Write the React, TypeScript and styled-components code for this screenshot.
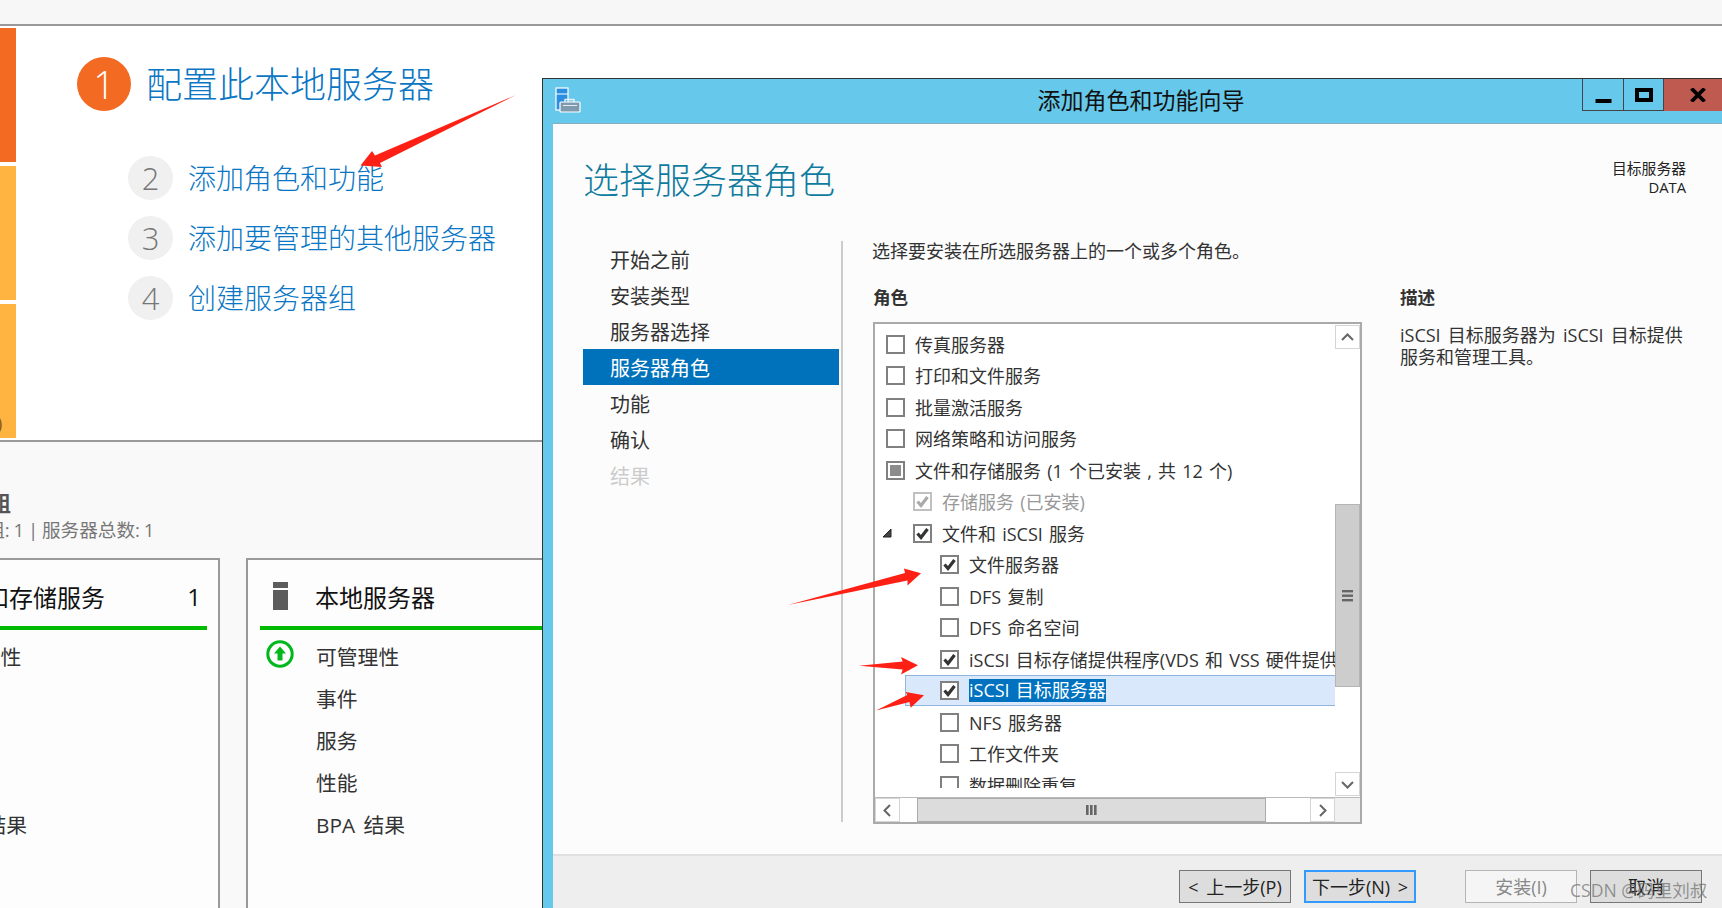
import { FunctionComponent } from "react";
import styled, { createGlobalStyle } from "styled-components";

const SANS = `"Open Sans", "Noto Sans CJK SC", sans-serif`;

const GlobalStyle = createGlobalStyle`
    html, body {
        margin: 0;
        padding: 0;
        background: #f9f9f9;
    }
    * {
        box-sizing: border-box;
    }
`;

const Page = styled.div`
    position: relative;
    width: 1722px;
    height: 908px;
    overflow: hidden;
    font-family: ${SANS};
    color: #333;
    display: flex;
    flex-direction: column;
`;

const TopBand = styled.div`
    height: 26px;
    flex: none;
    background: #f7f7f7;
    border-bottom: 2px solid #999;
`;

const WelcomePanel = styled.section`
    height: 416px;
    flex: none;
    background: #fff;
    border-bottom: 2px solid #999;
    display: flex;
`;

const Stripe = styled.div`
    width: 16px;
    flex: none;
    padding-top: 2px;
    display: flex;
    flex-direction: column;
    gap: 4px;
`;

const StripeSegment = styled.div<{ $hot?: boolean }>`
    height: 134px;
    background: ${(p) => (p.$hot ? "#f36a22" : "#ffb341")};
    display: flex;
    align-items: flex-end;
    overflow: hidden;
    font-size: 18px;
    line-height: 24px;
    color: #8a5a12;
`;

const ClippedParen = styled.span`
    margin-left: -3px;
    margin-bottom: 3px;
`;

const Steps = styled.div`
    margin-left: 61px;
    padding-top: 31px;
`;

const LeadStep = styled.div`
    display: flex;
    align-items: center;
    gap: 15px;
    height: 54px;
`;

const LeadBadge = styled.div`
    width: 54px;
    height: 54px;
    border-radius: 50%;
    background: #f36a22;
    color: #fff;
    font-size: 38px;
    font-weight: 300;
    display: flex;
    align-items: center;
    justify-content: center;
`;

const LeadText = styled.div`
    margin-top: -4px;
    font-size: 36px;
    font-weight: 300;
    color: #0a76c4;
    white-space: nowrap;
`;

const StepList = styled.div`
    margin: 37px 0 0 51px;
`;

const StepRow = styled.div`
    height: 60px;
    display: flex;
    align-items: center;
    gap: 15px;
`;

const StepBadge = styled.div`
    width: 45px;
    height: 44px;
    border-radius: 50%;
    background: #f0f0f0;
    color: #777;
    font-size: 31px;
    font-weight: 300;
    display: flex;
    align-items: center;
    justify-content: center;
`;

const StepText = styled.div`
    margin-top: -3px;
    font-size: 28px;
    font-weight: 300;
    color: #0a76c4;
    white-space: nowrap;
`;

const LowerSection = styled.section`
    flex: 1;
    background: #f9f9f9;
    padding-top: 49px;
    overflow: hidden;
`;

const GroupTitle = styled.div`
    margin-left: -136px;
    height: 24px;
    line-height: 24px;
    font-size: 21px;
    font-weight: 700;
    color: #555;
    white-space: nowrap;
`;

const GroupSub = styled.div`
    margin: 4px 0 0 -144px;
    height: 22px;
    line-height: 22px;
    font-size: 18.6px;
    word-spacing: -1px;
    color: #777;
    white-space: nowrap;
`;

const Cards = styled.div`
    margin: 17px 0 0 -132px;
    display: flex;
    gap: 26px;
`;

const Card = styled.div`
    width: 352px;
    height: 420px;
    flex: none;
    background: #fdfdfd;
    border: 2px solid #999;
`;

const CardHeader = styled.div`
    height: 70px;
    margin: 0 11px 0 12px;
    padding: 6px 6px 0 13px;
    border-bottom: 4px solid #00bb00;
    display: flex;
    align-items: center;
`;

const CardTitle = styled.div`
    margin-left: 27px;
    flex: 1;
    font-size: 24px;
    color: #111;
    white-space: nowrap;
`;

const CardCount = styled.div`
    font-size: 24px;
    color: #111;
`;

const CardBody = styled.div`
    margin-top: 5px;
`;

const HealthRow = styled.div`
    height: 42px;
    padding-left: 18px;
    display: flex;
    align-items: center;
    gap: 22px;
    font-size: 20.8px;
    word-spacing: 3px;
    color: #333;
`;

const HealthSlot = styled.div`
    width: 28px;
    height: 28px;
    flex: none;
    margin-top: -4px;
`;

const Dialog = styled.div`
    position: absolute;
    left: 542px;
    top: 78px;
    width: 1180px;
    height: 830px;
    background: #66c9eb;
    border-left: 1px solid #333;
    border-top: 1px solid #333;
    display: flex;
    flex-direction: column;
`;

const TitleBar = styled.header`
    height: 44px;
    flex: none;
    display: grid;
    grid-template-columns: 157px 1fr 140px;
    align-items: start;
`;

const TitleIcon = styled.svg`
    margin: 8px 0 0 12px;
    display: block;
`;

const TitleText = styled.div`
    text-align: center;
    font-size: 23px;
    line-height: 42px;
    color: #111;
`;

const WindowButtons = styled.div`
    display: flex;
    height: 32px;
`;

const WindowButton = styled.div<{ $width: number; $close?: boolean }>`
    width: ${(p) => p.$width}px;
    padding-left: ${(p) => (p.$close ? 9 : 0)}px;
    display: flex;
    align-items: center;
    justify-content: center;
    border-left: 1px solid #444;
    border-bottom: ${(p) => (p.$close ? "none" : "1px solid #444")};
    background: ${(p) => (p.$close ? "#bf5a50" : "transparent")};
`;

const DialogBody = styled.div`
    flex: 1;
    margin-left: 10px;
    background: #fcfcfc;
    border-top: 1px solid #86aebf;
    display: flex;
    flex-direction: column;
    min-height: 0;
`;

const BodyHeader = styled.div`
    height: 117px;
    flex: none;
    display: flex;
    justify-content: space-between;
    padding: 35px 36px 0 30px;
`;

const PageTitle = styled.h1`
    margin: 0;
    font-size: 36px;
    line-height: 44px;
    font-weight: 300;
    color: #0f7b9e;
`;

const TargetInfo = styled.div`
    text-align: right;
    font-size: 14.8px;
    line-height: 19px;
    color: #222;
`;

const MainRow = styled.div`
    height: 581px;
    flex: none;
    margin-left: 30px;
    display: flex;
`;

const Nav = styled.nav`
    width: 260px;
    flex: none;
    padding-right: 2px;
    border-right: 2px solid #ccc;
`;

const NavItem = styled.div<{ $selected?: boolean; $disabled?: boolean }>`
    height: 36px;
    padding-left: 27px;
    display: flex;
    align-items: center;
    font-size: 20px;
    color: ${(p) => (p.$selected ? "#fff" : p.$disabled ? "#ccc" : "#333")};
    background: ${(p) => (p.$selected ? "#0072bc" : "transparent")};
`;

const RolesColumn = styled.div`
    width: 489px;
    flex: none;
    margin-left: 30px;
`;

const Intro = styled.div`
    margin-left: -1px;
    height: 20px;
    line-height: 20px;
    font-size: 18px;
    color: #333;
    white-space: nowrap;
`;

const SectionLabel = styled.div`
    height: 20px;
    line-height: 20px;
    font-size: 17.6px;
    font-weight: 700;
    color: #333;
`;

const RolesLabel = styled(SectionLabel)`
    margin-top: 26px;
`;

const ListBox = styled.div`
    margin-top: 15px;
    height: 502px;
    border: 2px solid #aaa;
    background: #fff;
    display: grid;
    grid-template-columns: 1fr 25px;
    grid-template-rows: 1fr 25px;
`;

const ListCell = styled.div`
    padding-bottom: 9px;
    min-width: 0;
    min-height: 0;
`;

const ListViewport = styled.div`
    height: 100%;
    padding-top: 4px;
    overflow: hidden;
`;

const Row = styled.div<{ $level: number; $disabled?: boolean; $selected?: boolean }>`
    height: 31.5px;
    padding-left: ${(p) => (p.$selected ? 34 : 11 + p.$level * 27)}px;
    margin-left: ${(p) => (p.$selected ? 30 : 0)}px;
    display: flex;
    align-items: center;
    font-size: 18px;
    word-spacing: 1.5px;
    white-space: nowrap;
    color: ${(p) => (p.$disabled ? "#999" : "#333")};
    background: ${(p) => (p.$selected ? "#d9e8fb" : "transparent")};
    border: ${(p) => (p.$selected ? "1px solid #8fb4dd" : "none")};
    border-right: none;
`;

const Twisty = styled.svg`
    width: 31px;
    height: 10px;
    margin-left: -31px;
    flex: none;
`;

const Box = styled.span<{ $faded?: boolean }>`
    width: 19px;
    height: 19px;
    flex: none;
    margin-top: 1px;
    margin-right: 10px;
    background: #fff;
    border: 2px solid ${(p) => (p.$faded ? "#c0c0c0" : "#808080")};
    display: flex;
    align-items: center;
    justify-content: center;
`;

const MixedFill = styled.span`
    width: 11px;
    height: 11px;
    background: #8c8c8c;
`;

const SelectedText = styled.span`
    background: #0072c0;
    color: #fff;
    line-height: 23px;
`;

const VScroll = styled.div`
    background: #fff;
    display: flex;
    flex-direction: column;
    padding-top: 1px;
`;

const ScrollButton = styled.div`
    width: 25px;
    height: 24px;
    flex: none;
    background: #fff;
    border: 1px solid #d5d5d5;
    display: flex;
    align-items: center;
    justify-content: center;
`;

const VThumb = styled.div`
    margin-top: 155px;
    height: 183px;
    flex: none;
    background: #cdcdcd;
    border: 1px solid #b5b5b5;
    display: flex;
    align-items: center;
    justify-content: center;
`;

const VDown = styled(ScrollButton)`
    margin-top: auto;
    margin-bottom: 1px;
`;

const HScroll = styled.div`
    background: #fff;
    border-top: 1px solid #bbb;
    display: flex;
`;

const HThumb = styled.div`
    margin-left: 17px;
    width: 349px;
    flex: none;
    background: #dcdcdc;
    border: 1px solid #aaa;
    display: flex;
    align-items: center;
    justify-content: center;
`;

const HRight = styled(ScrollButton)`
    margin-left: auto;
`;

const ScrollCorner = styled.div`
    background: #f0f0f0;
    border-top: 1px solid #bbb;
`;

const DescColumn = styled.div`
    width: 290px;
    flex: none;
    margin-left: 38px;
    padding-top: 46px;
`;

const DescText = styled.p`
    margin: 18px 0 0;
    font-size: 18px;
    line-height: 21.5px;
    word-spacing: 2.5px;
    color: #333;
`;

const Spacer = styled.div`
    height: 32px;
    flex: none;
`;

const Footer = styled.footer`
    flex: 1;
    background: #eee;
    border-top: 2px solid #e0e0e0;
    padding: 14px 20px 0 0;
    display: flex;
    justify-content: flex-end;
    align-items: flex-start;
`;

const WizardButton = styled.div<{ $variant?: "focus" | "disabled" }>`
    width: 112px;
    height: 33px;
    margin-left: 13px;
    padding-bottom: 2px;
    display: flex;
    align-items: center;
    justify-content: center;
    font-size: 18px;
    word-spacing: 3px;
    white-space: pre;
    color: ${(p) => (p.$variant === "disabled" ? "#888" : "#222")};
    background: ${(p) => (p.$variant === "disabled" ? "#f5f5f5" : "#ddd")};
    border: 1px solid
        ${(p) => (p.$variant === "focus" ? "#3399ff" : p.$variant === "disabled" ? "#b5b5b5" : "#777")};
    outline: ${(p) => (p.$variant === "focus" ? "1px solid #3399ff" : "none")};
    outline-offset: -2px;
`;

const InstallButton = styled(WizardButton)`
    margin-left: 49px;
`;

const Watermark = styled.div`
    position: absolute;
    left: 1570px;
    top: 877px;
    font-size: 17.6px;
    line-height: 26px;
    color: rgba(110, 110, 110, 0.72);
    white-space: nowrap;
`;

const Annotations = styled.svg`
    position: absolute;
    left: 0;
    top: 0;
    pointer-events: none;
`;

const Check: FunctionComponent<{ faded?: boolean }> = ({ faded }) => (
    <svg width="15" height="15" viewBox="0 0 15 15">
        <path d="M2.5 7.5 L6 11.5 L12.5 3" fill="none" stroke={faded ? "#aaa" : "#333"} strokeWidth="3.2" />
    </svg>
);

const Chevron: FunctionComponent<{ dir: "up" | "down" | "left" | "right" }> = ({ dir }) => {
    const paths = {
        up: "M2 10 L7.5 4.5 L13 10",
        down: "M2 5 L7.5 10.5 L13 5",
        left: "M10 2 L4.5 7.5 L10 13",
        right: "M5 2 L10.5 7.5 L5 13",
    };
    return (
        <svg width="15" height="15" viewBox="0 0 15 15">
            <path d={paths[dir]} fill="none" stroke="#666" strokeWidth="2" />
        </svg>
    );
};

const Grip: FunctionComponent<{ vertical?: boolean }> = ({ vertical }) => (
    <svg width="13" height="12" viewBox="0 0 13 12">
        {vertical
            ? [1, 5, 9].map((x) => <rect key={x} x={x} y="1" width="2.6" height="10" fill="#666" />)
            : [0, 4.5, 9].map((y) => <rect key={y} x="1" y={y} width="11" height="2.4" fill="#666" />)}
    </svg>
);

type CheckState = "off" | "on" | "mixed" | "faded";

interface RoleRow {
    level: number;
    label: string;
    state: CheckState;
    expanded?: boolean;
    selected?: boolean;
}

const roles: RoleRow[] = [
    { level: 0, label: "传真服务器", state: "off" },
    { level: 0, label: "打印和文件服务", state: "off" },
    { level: 0, label: "批量激活服务", state: "off" },
    { level: 0, label: "网络策略和访问服务", state: "off" },
    { level: 0, label: "文件和存储服务 (1 个已安装 , 共 12 个)", state: "mixed" },
    { level: 1, label: "存储服务 (已安装)", state: "faded" },
    { level: 1, label: "文件和 iSCSI 服务", state: "on", expanded: true },
    { level: 2, label: "文件服务器", state: "on" },
    { level: 2, label: "DFS 复制", state: "off" },
    { level: 2, label: "DFS 命名空间", state: "off" },
    { level: 2, label: "iSCSI 目标存储提供程序(VDS 和 VSS 硬件提供程序)", state: "on" },
    { level: 2, label: "iSCSI 目标服务器", state: "on", selected: true },
    { level: 2, label: "NFS 服务器", state: "off" },
    { level: 2, label: "工作文件夹", state: "off" },
    { level: 2, label: "数据删除重复", state: "off" },
];

const navItems = ["开始之前", "安装类型", "服务器选择", "服务器角色", "功能", "确认", "结果"];
const healthItems = ["可管理性", "事件", "服务", "性能", "BPA 结果"];

const arrows = [
    "M516 95 L375 155.5 L372 151 L360.5 165.5 L382 167 L380 163 Z",
    "M788 605 L905 573 L904 568.5 L921 573.3 L907.5 585.5 L907.5 580.5 Z",
    "M859 665.7 L902.7 661.5 L901 657 L918 665.3 L901 674.5 L902.7 669.5 Z",
    "M876 710.5 L907.3 695 L905.7 692 L924 695.3 L910.7 707.8 L909.5 702 Z",
];

const HealthCard: FunctionComponent<{ title: string; count?: number; icon: boolean }> = ({ title, count, icon }) => (
    <Card>
        <CardHeader>
            <svg width="15" height="28" viewBox="0 0 15 28">
                <rect x="0" y="0" width="15" height="6" fill="#5c5c5c" />
                <rect x="0" y="8" width="15" height="20" fill="#5c5c5c" />
            </svg>
            <CardTitle>{title}</CardTitle>
            {count !== undefined && <CardCount>{count}</CardCount>}
        </CardHeader>
        <CardBody>
            {healthItems.map((item, i) => (
                <HealthRow key={item}>
                    <HealthSlot>
                        {i === 0 && icon && (
                            <svg width="28" height="28" viewBox="0 0 28 28">
                                <circle cx="14" cy="14" r="12.2" fill="#fff" stroke="#00b81c" strokeWidth="3" />
                                <path d="M14 6.5 L20 13.5 L16.5 13.5 L16.5 20.5 L11.5 20.5 L11.5 13.5 L8 13.5 Z" fill="#00b81c" />
                            </svg>
                        )}
                    </HealthSlot>
                    {item}
                </HealthRow>
            ))}
        </CardBody>
    </Card>
);

const App: FunctionComponent = () => {
    return (
        <Page>
            <GlobalStyle />
            <TopBand />
            <WelcomePanel>
                <Stripe>
                    <StripeSegment $hot />
                    <StripeSegment />
                    <StripeSegment>
                        <ClippedParen>)</ClippedParen>
                    </StripeSegment>
                </Stripe>
                <Steps>
                    <LeadStep>
                        <LeadBadge>1</LeadBadge>
                        <LeadText>配置此本地服务器</LeadText>
                    </LeadStep>
                    <StepList>
                        <StepRow>
                            <StepBadge>2</StepBadge>
                            <StepText>添加角色和功能</StepText>
                        </StepRow>
                        <StepRow>
                            <StepBadge>3</StepBadge>
                            <StepText>添加要管理的其他服务器</StepText>
                        </StepRow>
                        <StepRow>
                            <StepBadge>4</StepBadge>
                            <StepText>创建服务器组</StepText>
                        </StepRow>
                    </StepList>
                </Steps>
            </WelcomePanel>
            <LowerSection>
                <GroupTitle>角色和服务器组</GroupTitle>
                <GroupSub>角色: 1 | 服务器组: 1 | 服务器总数: 1</GroupSub>
                <Cards>
                    <HealthCard title="文件和存储服务" count={1} icon={false} />
                    <HealthCard title="本地服务器" icon />
                </Cards>
            </LowerSection>

            <Dialog>
                <TitleBar>
                    <TitleIcon width="26" height="26" viewBox="0 0 26 26">
                        <rect x="1" y="1" width="12" height="22" fill="#2a8fe0" stroke="#fff" strokeWidth="1.2" />
                        <path d="M1 7 H13" stroke="#fff" strokeWidth="1" />
                        <path d="M10 15 V12.5 H19 V15" fill="none" stroke="#e8eef2" strokeWidth="1.4" />
                        <rect x="5" y="15" width="20" height="10" rx="1" fill="#7f9bb0" stroke="#fff" strokeWidth="1.2" />
                        <path d="M8 18.5 H22" stroke="#fff" strokeWidth="0.8" />
                    </TitleIcon>
                    <TitleText>添加角色和功能向导</TitleText>
                    <WindowButtons>
                        <WindowButton $width={41}>
                            <svg width="17" height="20" viewBox="0 0 17 20">
                                <rect x="0.5" y="14" width="16" height="4" fill="#000" />
                            </svg>
                        </WindowButton>
                        <WindowButton $width={40}>
                            <svg width="18" height="14" viewBox="0 0 18 14">
                                <rect x="2" y="2" width="14" height="10" fill="none" stroke="#000" strokeWidth="4" />
                            </svg>
                        </WindowButton>
                        <WindowButton $width={59} $close>
                            <svg width="16" height="14" viewBox="0 0 16 14">
                                <path d="M1.5 0.5 L14.5 13.5 M14.5 0.5 L1.5 13.5" stroke="#000" strokeWidth="3.8" />
                            </svg>
                        </WindowButton>
                    </WindowButtons>
                </TitleBar>
                <DialogBody>
                    <BodyHeader>
                        <PageTitle>选择服务器角色</PageTitle>
                        <TargetInfo>
                            目标服务器
                            <br />
                            DATA
                        </TargetInfo>
                    </BodyHeader>
                    <MainRow>
                        <Nav>
                            {navItems.map((item, i) => (
                                <NavItem key={item} $selected={i === 3} $disabled={i === 6}>
                                    {item}
                                </NavItem>
                            ))}
                        </Nav>
                        <RolesColumn>
                            <Intro>选择要安装在所选服务器上的一个或多个角色。</Intro>
                            <RolesLabel>角色</RolesLabel>
                            <ListBox>
                                <ListCell>
                                    <ListViewport>
                                        {roles.map((role) => (
                                            <Row
                                                key={role.label}
                                                $level={role.level}
                                                $disabled={role.state === "faded"}
                                                $selected={role.selected}
                                            >
                                                {role.expanded && (
                                                    <Twisty viewBox="0 0 31 10">
                                                        <path d="M1 9 L9 1 V9 Z" fill="#444" stroke="#222" strokeWidth="1" />
                                                    </Twisty>
                                                )}
                                                <Box $faded={role.state === "faded"}>
                                                    {role.state === "on" && <Check />}
                                                    {role.state === "faded" && <Check faded />}
                                                    {role.state === "mixed" && <MixedFill />}
                                                </Box>
                                                {role.selected ? <SelectedText>{role.label}</SelectedText> : role.label}
                                            </Row>
                                        ))}
                                    </ListViewport>
                                </ListCell>
                                <VScroll>
                                    <ScrollButton>
                                        <Chevron dir="up" />
                                    </ScrollButton>
                                    <VThumb>
                                        <Grip />
                                    </VThumb>
                                    <VDown>
                                        <Chevron dir="down" />
                                    </VDown>
                                </VScroll>
                                <HScroll>
                                    <ScrollButton>
                                        <Chevron dir="left" />
                                    </ScrollButton>
                                    <HThumb>
                                        <Grip vertical />
                                    </HThumb>
                                    <HRight>
                                        <Chevron dir="right" />
                                    </HRight>
                                </HScroll>
                                <ScrollCorner />
                            </ListBox>
                        </RolesColumn>
                        <DescColumn>
                            <SectionLabel>描述</SectionLabel>
                            <DescText>
                                iSCSI 目标服务器为 iSCSI 目标提供
                                <br />
                                服务和管理工具。
                            </DescText>
                        </DescColumn>
                    </MainRow>
                    <Spacer />
                    <Footer>
                        <WizardButton>{"< 上一步(P)"}</WizardButton>
                        <WizardButton $variant="focus">{"下一步(N) >"}</WizardButton>
                        <InstallButton $variant="disabled">安装(I)</InstallButton>
                        <WizardButton>取消</WizardButton>
                    </Footer>
                </DialogBody>
            </Dialog>

            <Watermark>CSDN @码里刘叔</Watermark>
            <Annotations width="1722" height="908" viewBox="0 0 1722 908">
                {arrows.map((d) => (
                    <path key={d} d={d} fill="#ff2015" />
                ))}
            </Annotations>
        </Page>
    );
};

export default App;
